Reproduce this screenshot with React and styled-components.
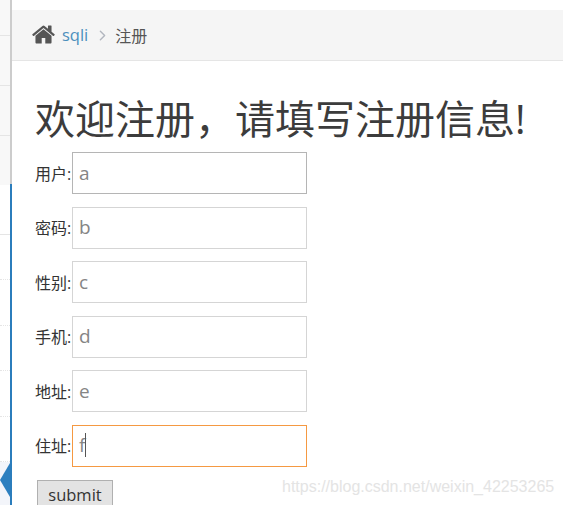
import React from 'react';
import styled, { createGlobalStyle } from 'styled-components';
import { LuChevronRight } from 'react-icons/lu';

const GlobalStyle = createGlobalStyle`
  html, body {
    margin: 0;
    padding: 0;
    height: 100%;
    overflow: hidden;
    background: #ffffff;
    font-family: "Open Sans", "Noto Sans CJK SC", sans-serif;
  }
`;

const Page = styled.div`
  display: flex;
  width: 563px;
  height: 505px;
  overflow: hidden;
`;

const Sidebar = styled.aside`
  position: relative;
  flex: none;
  width: 10px;
  display: flex;
  flex-direction: column;
`;

const SideRow = styled.div`
  flex: ${p => p.$h ? 'none' : 1};
  height: ${p => p.$h}px;
  background: ${p => p.$bg || '#ffffff'};
  border-bottom: 1px ${p => p.$dotted ? 'dotted' : 'solid'} ${p => p.$line || 'transparent'};
  box-sizing: border-box;
`;

const SideArrow = styled.div`
  position: absolute;
  right: 0;
  top: 463px;
  width: 0;
  height: 0;
  border-top: 17px solid transparent;
  border-bottom: 17px solid transparent;
  border-right: 10px solid #2d7fbf;
`;

const Rail = styled.div`
  flex: none;
  width: 2px;
  display: flex;
  flex-direction: column;
`;

const RailPart = styled.div`
  flex: ${p => p.$h ? 'none' : 1};
  height: ${p => p.$h}px;
  background: ${p => p.$color};
`;

const Main = styled.main`
  flex: 1;
  min-width: 0;
  position: relative;
`;

const TopSpace = styled.div`
  height: 10px;
`;

const Breadcrumbs = styled.nav`
  display: flex;
  align-items: center;
  height: 51px;
  box-sizing: border-box;
  background: #f5f5f5;
  border-bottom: 1px solid #e5e5e5;
  padding-left: 19px;
  font-size: 16px;
  color: #555555;
`;

const HomeIcon = styled.svg`
  width: 25px;
  height: 25px;
  margin: -2px 6px 0 0;
  fill: #555555;
`;

const CrumbLink = styled.span`
  color: #4c8fbd;
  font-size: 16.5px;
  margin-top: -1px;
`;

const Separator = styled(LuChevronRight)`
  width: 17px;
  height: 17px;
  color: #b2b6bf;
  margin: 0 4px 0 6px;
`;

const CrumbCurrent = styled.span`
  margin-top: -1px;
`;

const Content = styled.div`
  padding: 0 0 0 23px;
`;

const Title = styled.h1`
  margin: 32px 0 0;
  font-size: 40px;
  font-weight: 400;
  line-height: 52px;
  color: #3c3c3c;
  white-space: nowrap;
`;

const Form = styled.form`
  display: flex;
  flex-direction: column;
  gap: 12.5px;
  margin: 7px 0 0 0;
`;

const Row = styled.div`
  display: flex;
  align-items: center;
  height: 42px;
`;

const Label = styled.label`
  width: 37px;
  margin-top: -1px;
  font-size: 16px;
  color: #333333;
  white-space: nowrap;
`;

const Input = styled.div`
  display: flex;
  align-items: center;
  width: 235px;
  height: 42px;
  box-sizing: border-box;
  padding: 0 0 1px 6px;
  background: #ffffff;
  border: 1px solid ${p => p.$border};
  font-size: 19px;
  color: #858585;
`;

const Caret = styled.span`
  width: 1px;
  height: 24px;
  background: #555555;
`;

const Submit = styled.button`
  display: block;
  width: 76px;
  height: 30px;
  margin: 0.5px 0 0 2px;
  padding: 0;
  background: #e3e3e3;
  border: 1px solid #b0b0b0;
  font-family: inherit;
  font-size: 16.5px;
  color: #333333;
`;

const Watermark = styled.div`
  position: absolute;
  left: 270px;
  top: 478px;
  font-family: "Liberation Sans", sans-serif;
  font-size: 16px;
  color: #e4e4e4;
  white-space: nowrap;
`;

const fields = [
  { label: '用户:', value: 'a', border: '#b5b5b5' },
  { label: '密码:', value: 'b', border: '#d5d5d5' },
  { label: '性别:', value: 'c', border: '#d5d5d5' },
  { label: '手机:', value: 'd', border: '#d5d5d5' },
  { label: '地址:', value: 'e', border: '#d5d5d5' },
  { label: '住址:', value: 'f', border: '#f59942', caret: true }
];

const App = () => (
  <Page>
    <GlobalStyle />
    <Sidebar>
      <SideRow $h={36} $bg="#f8f8f8" $line="#e5e5e5" />
      <SideRow $h={50} $bg="#f8f8f8" $line="#e5e5e5" />
      <SideRow $h={50} $bg="#f8f8f8" $line="#e5e5e5" />
      <SideRow $h={49} $bg="#f8f8f8" />
      <SideRow $h={50} $line="#e5e5e5" />
      <SideRow $h={45} $line="#e5e5e5" $dotted />
      <SideRow $h={46} $line="#e5e5e5" $dotted />
      <SideRow $h={45} $line="#e5e5e5" $dotted />
      <SideRow $h={46} $line="#e5e5e5" $dotted />
      <SideRow $h={45} $line="#e5e5e5" $dotted />
      <SideRow $bg="#f3f5fa" />
      <SideArrow />
    </Sidebar>
    <Rail>
      <RailPart $h={184} $color="#cccccc" />
      <RailPart $color="#2b7dbc" />
    </Rail>
    <Main>
      <TopSpace />
      <Breadcrumbs>
        <HomeIcon viewBox="0 0 1792 1792">
          <path d="M1472 992v480q0 26-19 45t-45 19h-384v-384h-256v384h-384q-26 0-45-19t-19-45v-480q0-1 .5-3t.5-3l575-474 575 474q1 2 1 6zm223-69l-62 74q-8 9-21 11h-3q-13 0-21-7l-692-577-692 577q-12 8-24 7-13-2-21-11l-62-74q-8-10-7-23.500t11-21.500l719-599q32-26 76-26t76 26l244 204v-195q0-14 9-23t23-9h192q14 0 23 9t9 23v408l219 182q10 8 11 21.500t-7 23.500z" />
        </HomeIcon>
        <CrumbLink>sqli</CrumbLink>
        <Separator />
        <CrumbCurrent>注册</CrumbCurrent>
      </Breadcrumbs>
      <Content>
        <Title>欢迎注册，请填写注册信息!</Title>
        <Form>
          {fields.map(f => (
            <Row key={f.label}>
              <Label>{f.label}</Label>
              <Input $border={f.border}>
                {f.value}
                {f.caret && <Caret />}
              </Input>
            </Row>
          ))}
          <Submit type="button">submit</Submit>
        </Form>
      </Content>
      <Watermark>https://blog.csdn.net/weixin_42253265</Watermark>
    </Main>
  </Page>
);

export default App;
